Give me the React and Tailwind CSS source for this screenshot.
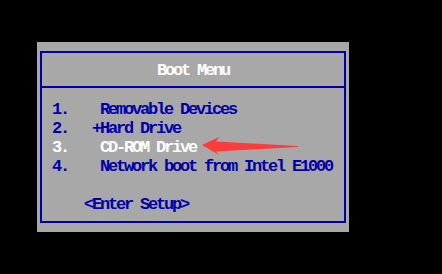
import React from 'react';

const rows = [
  { text: '1.    Removable Devices', active: false },
  { text: '2.   +Hard Drive', active: false },
  { text: '3.    CD-ROM Drive', active: true },
  { text: '4.    Network boot from Intel E1000', active: false },
  { text: ' ', active: false },
  { text: '    <Enter Setup>', active: false },
];

const Arrow = () => (
  <svg
    className="absolute left-[165px] top-[95px]"
    width="100"
    height="20"
    viewBox="0 0 100 20"
  >
    <polygon
      points="0,8 17,0 14,4.5 96,9 96,10 14,14.5 17,18"
      fill="#ff3c3c"
    />
  </svg>
);

export default function App() {
  return (
    <div
      className="w-[442px] h-[274px] bg-black overflow-hidden pt-[42px] pl-[37px]"
      style={{ fontFamily: '"Liberation Mono", "DejaVu Sans Mono", monospace' }}
    >
      <div className="relative w-[312px] h-[190px] bg-[#a8a8a8] px-[3px] pt-[9px] pb-[9px]">
        <div className="h-full border-2 border-[#0000a8] flex flex-col">
          <div className="h-[35px] pt-[3px] border-b-2 border-[#0000a8] flex items-center justify-center text-white text-[17px] font-bold tracking-[-2.2px]">
            Boot Menu
          </div>
          <div className="pt-[12px] pl-[10px] text-[17px] font-bold tracking-[-2.2px] leading-[19px]">
            {rows.map((r, i) => (
              <div
                key={i}
                className={`whitespace-pre ${r.active ? 'text-white' : 'text-[#0000a8]'}`}
              >
                {r.text}
              </div>
            ))}
          </div>
        </div>
        <Arrow />
      </div>
    </div>
  );
}
